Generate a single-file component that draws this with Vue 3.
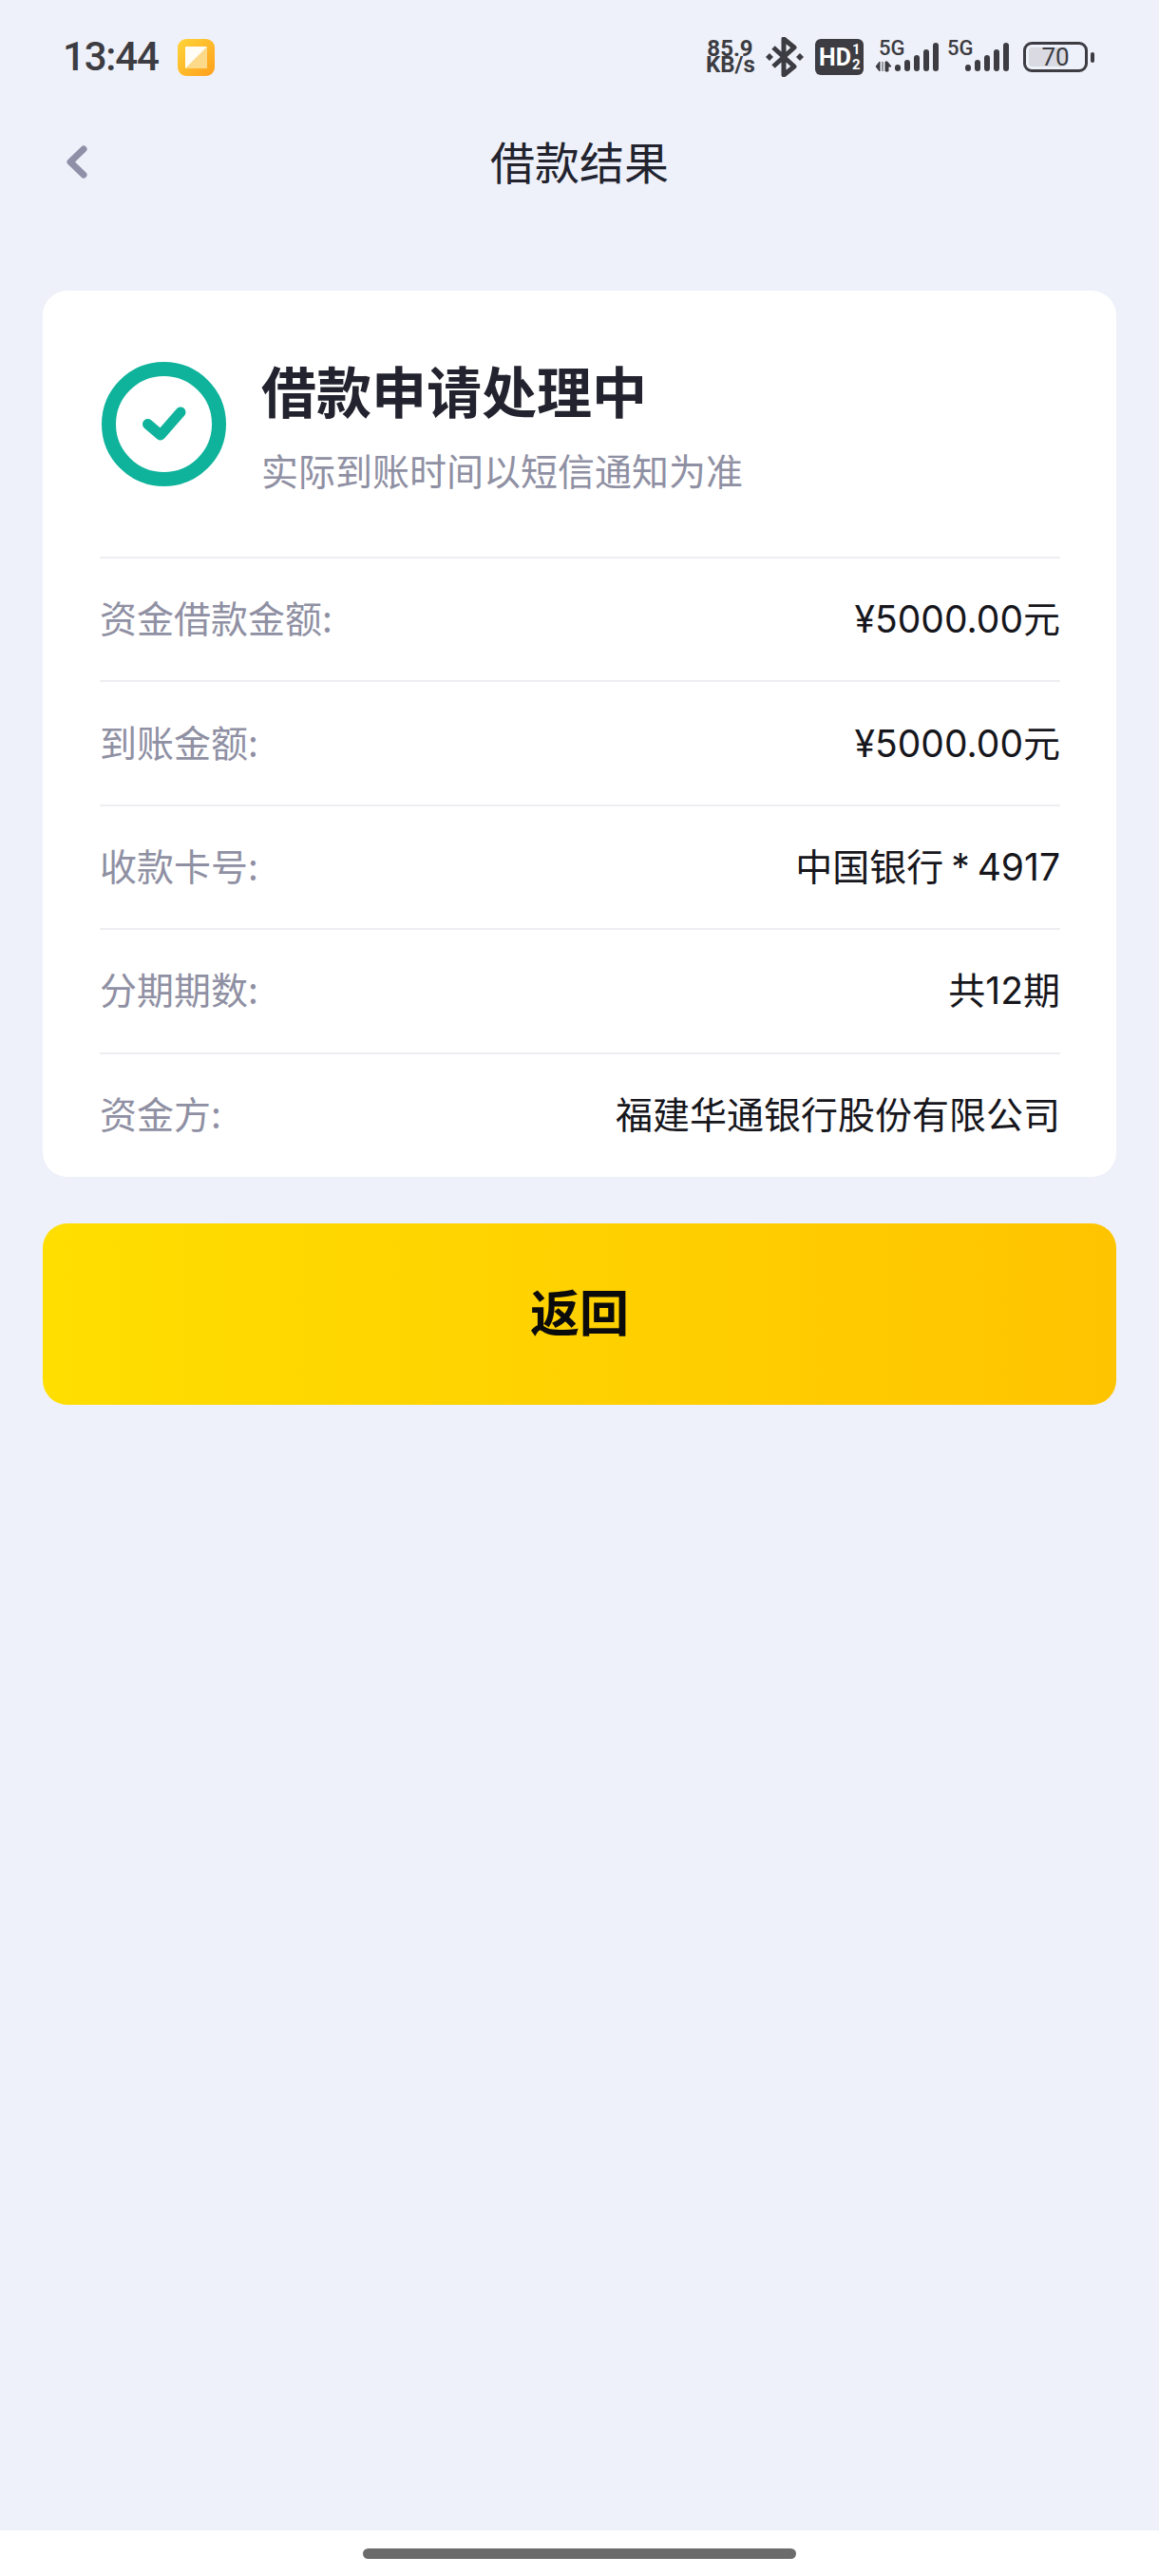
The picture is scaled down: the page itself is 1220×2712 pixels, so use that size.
<template>
  <div class="page">
    <div class="status-bar">
      <div class="status-left">
        <span class="time">13:44</span>
        <svg class="app-dot" viewBox="0 0 39 39" width="39" height="39">
          <defs>
            <linearGradient id="dotBg" x1="0" y1="0" x2="1" y2="1">
              <stop offset="0" stop-color="#ffd53a" />
              <stop offset="1" stop-color="#ff9f1c" />
            </linearGradient>
          </defs>
          <rect width="39" height="39" rx="9" fill="url(#dotBg)" />
          <path d="M8 8h23v23H8z" fill="#fdd98a" />
          <path d="M8 8h23L8 31z" fill="#fffdf6" />
        </svg>
      </div>
      <div class="status-right">
        <div class="speed">85.9
KB/s</div>
        <svg viewBox="0 0 40 42" width="40" height="42">
          <path d="M8 11l22 20-11 9V2l11 9L8 31" fill="none" stroke="#3c3c42" stroke-width="5" stroke-linejoin="round" />
          <path d="M0 21l4-4 4 4-4 4zM32 21l4-4 4 4-4 4z" fill="#3c3c42" />
        </svg>
        <div class="hd">
          <span class="hd-main">HD</span>
          <span class="hd-sub">1
2</span>
        </div>
        <div class="signals">
          <svg viewBox="0 -5 70 50" width="70" height="50">
            <text x="4" y="18" class="net">5G</text>
            <path d="M5 25v10l-4-5zM8 25v10M13 25l4 5h-3v5h-3V25z" fill="#3c3c42" stroke="#3c3c42" stroke-width="1" />
            <rect v-for="b in bars" :key="b.x" :x="b.x + 21" :y="b.y" width="6" :height="35 - b.y" rx="3" fill="#3c3c42" />
          </svg>
          <svg viewBox="0 -5 66 50" width="66" height="50">
            <text x="0" y="18" class="net">5G</text>
            <rect v-for="b in bars" :key="b.x" :x="b.x + 19" :y="b.y" width="6" :height="35 - b.y" rx="3" fill="#3c3c42" />
          </svg>
        </div>
        <div class="battery">
          <div class="cell">
            <div class="level"></div>
            <span class="percent">70</span>
          </div>
          <div class="nub"></div>
        </div>
      </div>
    </div>

    <div class="nav">
      <svg class="back" viewBox="0 0 22 35" width="22" height="35">
        <path d="M18 4L4 17.5 18 31" fill="none" stroke="#8f90a8" stroke-width="7" stroke-linecap="round" stroke-linejoin="round" />
      </svg>
      <span class="nav-title">借款结果</span>
    </div>

    <div class="content">
      <div class="card">
        <div class="head">
          <svg class="ok" viewBox="0 0 131 131" width="131" height="131">
            <circle cx="65.5" cy="65.5" r="58" fill="none" stroke="#0fb39b" stroke-width="15" />
            <path d="M48.5 65.5L62 77l21-24" fill="none" stroke="#0fb39b" stroke-width="11" stroke-linecap="round" stroke-linejoin="round" />
          </svg>
          <div class="head-text">
            <div class="title">借款申请处理中</div>
            <div class="sub">实际到账时间以短信通知为准</div>
          </div>
        </div>
        <div v-for="row in rows" :key="row.label" class="row">
          <span class="label">{{ row.label }}</span>
          <span class="value">{{ row.value }}</span>
        </div>
      </div>
      <button class="back-btn">返回</button>
    </div>

    <div class="home-area">
      <div class="home-bar"></div>
    </div>
  </div>
</template>

<script setup>
const rows = [
  { label: "资金借款金额:", value: "¥5000.00元" },
  { label: "到账金额:", value: "¥5000.00元" },
  { label: "收款卡号:", value: "中国银行 * 4917" },
  { label: "分期期数:", value: "共12期" },
  { label: "资金方:", value: "福建华通银行股份有限公司" }
]

// 信号格
const bars = [
  { x: 0, y: 28 },
  { x: 10, y: 23 },
  { x: 20, y: 18 },
  { x: 30, y: 12 },
  { x: 40, y: 5 }
]
</script>

<style>
body {
  background: #eef1f9;
}
</style>

<style scoped>
.page {
  width: 1220px;
  height: 2712px;
  display: flex;
  flex-direction: column;
  background: #eef1f9;
  font-family: "Noto Sans CJK SC", "Noto Sans", sans-serif;
  color: #22232e;
}

.status-bar {
  height: 120px;
  flex-shrink: 0;
  padding: 0 68px 0 66px;
  display: flex;
  justify-content: space-between;
  align-items: center;
}

.status-left {
  display: flex;
  align-items: center;
  gap: 20px;
}

.time {
  font-family: Roboto, sans-serif;
  font-size: 42px;
  font-weight: 500;
  letter-spacing: -1.2px;
  line-height: 50px;
  color: #3c3c42;
}

.status-right {
  display: flex;
  align-items: center;
  gap: 12px;
  color: #3c3c42;
}

.speed {
  width: 51px;
  font-family: Roboto, sans-serif;
  font-size: 24px;
  font-weight: 700;
  line-height: 17px;
  text-align: center;
  white-space: pre-line;
}

.hd {
  width: 51px;
  height: 38px;
  padding-left: 4px;
  box-sizing: border-box;
  display: flex;
  align-items: center;
  border-radius: 6px;
  background: #3c3c42;
  color: #fff;
  font-family: Roboto, sans-serif;
  font-weight: 700;
}

.hd-main {
  font-size: 25px;
}

.hd-sub {
  margin-left: 1px;
  font-size: 15px;
  line-height: 16px;
  white-space: pre-line;
}

.signals {
  display: flex;
  gap: 6px;
}

.net {
  font-family: Roboto, sans-serif;
  font-size: 22px;
  font-weight: 500;
  fill: #3c3c42;
}

.battery {
  display: flex;
  align-items: center;
  gap: 3px;
  margin-left: 2px;
}

.cell {
  position: relative;
  width: 68px;
  height: 32px;
  box-sizing: border-box;
  padding: 3px;
  border: 3px solid #3c3c42;
  border-radius: 9px;
}

.level {
  width: 70%;
  height: 100%;
  border-radius: 3px;
  background: #d9dae2;
}

.percent {
  position: absolute;
  inset: 0;
  text-align: center;
  font-family: Roboto, sans-serif;
  font-size: 26px;
  line-height: 26px;
  color: #3c3c42;
}

.nub {
  width: 4px;
  height: 11px;
  border-radius: 2px;
  background: #3c3c42;
}

.nav {
  position: relative;
  height: 102px;
  flex-shrink: 0;
  padding-bottom: 4px;
  box-sizing: border-box;
  display: flex;
  align-items: center;
  justify-content: center;
}

.back {
  position: absolute;
  left: 70px;
  top: 33px;
}

.nav-title {
  font-size: 47px;
  line-height: 60px;
  color: #22232e;
}

.content {
  flex: 1;
  padding: 84px 45px 0;
}

.card {
  height: 933px;
  box-sizing: border-box;
  padding: 0 59px 0 60px;
  border-radius: 26px;
  background: #fff;
}

.head {
  height: 280px;
  padding: 75px 0 0 2px;
  box-sizing: border-box;
  display: flex;
  gap: 37px;
}

.head-text {
  margin-top: -5px;
}

.title {
  font-size: 58px;
  line-height: 68px;
  font-weight: 700;
  color: #22232e;
}

.sub {
  margin-top: 25px;
  font-size: 39px;
  line-height: 50px;
  color: #8f90a3;
}

.row {
  height: 130.4px;
  box-sizing: border-box;
  padding-bottom: 6px;
  display: flex;
  justify-content: space-between;
  align-items: center;
  border-top: 2px solid #eeeef2;
}

.label {
  font-size: 39px;
  color: #8f90a3;
}

.value {
  font-family: Inter, "Noto Sans CJK SC", sans-serif;
  font-size: 39px;
  word-spacing: -3px;
  color: #16161c;
}

.back-btn {
  display: block;
  width: 100%;
  height: 191px;
  margin-top: 49px;
  padding: 0 0 9px;
  border: none;
  border-radius: 26px;
  background: linear-gradient(90deg, #ffde00, #ffc400);
  font-family: inherit;
  font-size: 52px;
  font-weight: 700;
  color: #0b0b0b;
}

.home-area {
  height: 48px;
  flex-shrink: 0;
  padding-top: 19px;
  box-sizing: border-box;
  background: #fff;
}

.home-bar {
  width: 456px;
  height: 11px;
  margin: 0 auto;
  border-radius: 6px;
  background: #6b6b6b;
}
</style>
